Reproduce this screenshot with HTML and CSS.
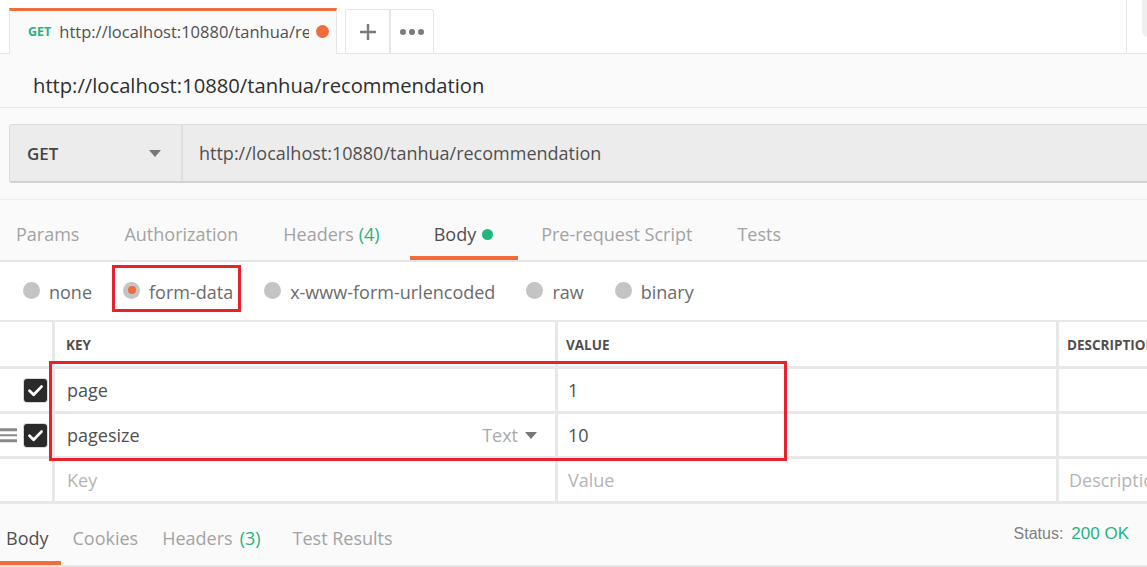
FILE: index.html
```html
<!DOCTYPE html>
<html lang="en">
<head>
<meta charset="utf-8">
<title>Postman request</title>
<link rel="stylesheet" href="styles.css">
</head>
<body>
<div class="app">
  <header class="tabstrip">
    <div class="req-tab">
      <span class="method-tag">GET</span>
      <span class="req-tab-title">http://localhost:10880/tanhua/recommendation</span>
      <span class="unsaved-dot"></span>
    </div>
    <div class="tab-actions">
      <div class="tab-btn tab-btn-plus">
        <svg width="20" height="20" viewBox="0 0 20 20"><path d="M10 2V18M2 10H18" stroke="#7a7a7a" stroke-width="2.4" fill="none"/></svg>
      </div>
      <div class="tab-btn">
        <svg width="26" height="8" viewBox="0 0 26 8"><circle cx="4" cy="4" r="3" fill="#7a7a7a"/><circle cx="13" cy="4" r="3" fill="#7a7a7a"/><circle cx="22" cy="4" r="3" fill="#7a7a7a"/></svg>
      </div>
    </div>
    <div class="strip-spacer"></div>
    <div class="strip-right"><div class="strip-knob"></div></div>
  </header>

  <div class="titlebar">http://localhost:10880/tanhua/recommendation</div>

  <section class="request">
    <div class="urlbar">
      <div class="method-select"><span class="method-label">GET</span><span class="caret"></span></div>
      <div class="url-input">http://localhost:10880/tanhua/recommendation</div>
    </div>
    <nav class="req-tabs">
      <span class="req-tab-item">Params</span>
      <span class="req-tab-item">Authorization</span>
      <span class="req-tab-item">Headers <span class="count">(4)</span></span>
      <span class="req-tab-item active">Body <span class="green-dot"></span></span>
      <span class="req-tab-item">Pre-request Script</span>
      <span class="req-tab-item">Tests</span>
    </nav>
  </section>

  <div class="body-types">
    <span class="radio-item"><span class="radio"></span><span class="radio-label">none</span></span>
    <span class="radio-item selected"><span class="radio"></span><span class="radio-label">form-data</span></span>
    <span class="radio-item"><span class="radio"></span><span class="radio-label">x-www-form-urlencoded</span></span>
    <span class="radio-item"><span class="radio"></span><span class="radio-label">raw</span></span>
    <span class="radio-item"><span class="radio"></span><span class="radio-label">binary</span></span>
  </div>

  <div class="kv-table">
    <div class="kv-row kv-head">
      <div class="cell cell-check"></div>
      <div class="cell">KEY</div>
      <div class="cell">VALUE</div>
      <div class="cell">DESCRIPTION</div>
    </div>
    <div class="kv-row">
      <div class="cell cell-check"><span class="checkbox"><svg width="23" height="23" viewBox="0 0 23 23"><path d="M5.5 11.8L9.6 15.8L17.5 7.6" stroke="#fff" stroke-width="2.8" fill="none" stroke-linecap="round" stroke-linejoin="round"/></svg></span></div>
      <div class="cell">page</div>
      <div class="cell">1</div>
      <div class="cell"></div>
    </div>
    <div class="kv-row">
      <div class="cell cell-check"><span class="drag"><i></i><i></i><i></i></span><span class="checkbox"><svg width="23" height="23" viewBox="0 0 23 23"><path d="M5.5 11.8L9.6 15.8L17.5 7.6" stroke="#fff" stroke-width="2.8" fill="none" stroke-linecap="round" stroke-linejoin="round"/></svg></span></div>
      <div class="cell cell-key"><span>pagesize</span><span class="type-select">Text <span class="type-caret"></span></span></div>
      <div class="cell">10</div>
      <div class="cell"></div>
    </div>
    <div class="kv-row">
      <div class="cell cell-check"></div>
      <div class="cell placeholder">Key</div>
      <div class="cell placeholder">Value</div>
      <div class="cell placeholder">Description</div>
    </div>
    <div class="highlight-box"></div>
  </div>

  <footer class="response">
    <nav class="res-tabs">
      <span class="res-tab active">Body</span>
      <span class="res-tab">Cookies</span>
      <span class="res-tab">Headers <span class="count">(3)</span></span>
      <span class="res-tab">Test Results</span>
    </nav>
    <div class="status"><span class="status-label">Status:</span><span class="status-value">200 OK</span></div>
  </footer>
</div>
</body>
</html>
```

FILE: styles.css
```css
* { box-sizing: border-box; }
html, body { margin: 0; padding: 0; }
body {
  width: 1147px;
  height: 567px;
  overflow: hidden;
  background: #ffffff;
  font-family: "Open Sans", "Noto Sans", sans-serif;
  color: #505050;
}
.app { width: 1147px; height: 567px; overflow: hidden; }

/* ---- top tab strip ---- */
.tabstrip {
  height: 54px;
  display: flex;
  align-items: flex-end;
  border-bottom: 1px solid #e6e6e6;
  background: #ffffff;
}
.req-tab {
  margin-left: 9px;
  width: 328px;
  height: 46px;
  margin-bottom: -1px;
  background: #fafafa;
  border-top: 3px solid #f26b3a;
  border-left: 1px solid #e6e6e6;
  border-right: 1px solid #e6e6e6;
  display: flex;
  align-items: center;
  padding: 0 8px 2px 18px;
  white-space: nowrap;
}
.method-tag {
  color: #26b47f;
  font-weight: 700;
  font-size: 12.5px;
  margin-right: 8px;
}
.req-tab-title {
  font-size: 16.5px;
  color: #505050;
  overflow: hidden;
  width: 250px;
  flex: none;
}
.unsaved-dot {
  width: 13px;
  height: 13px;
  border-radius: 50%;
  background: #f26b3a;
  margin-left: 7px;
  flex: none;
}
.tab-actions {
  margin-left: 8px;
  height: 44px;
  display: flex;
  border: 1px solid #e6e6e6;
  border-bottom: none;
  border-radius: 3px 3px 0 0;
}
.tab-btn {
  width: 42px;
  display: flex;
  align-items: center;
  justify-content: center;
}
.tab-btn-plus { width: 45px; border-right: 2px solid #e6e6e6; }
.strip-spacer { flex: 1; }
.strip-right {
  width: 21px;
  height: 54px;
  border-left: 1px solid #e6e6e6;
  margin-bottom: -1px;
  align-self: flex-start;
}
.strip-knob {
  margin-left: 15px;
  width: 10px;
  height: 37px;
  background: #efefef;
  border-radius: 0 0 0 6px;
}

/* ---- title ---- */
.titlebar {
  height: 54px;
  background: #fafafa;
  border-bottom: 1px solid #e6e6e6;
  padding: 8px 0 0 33px;
  display: flex;
  align-items: center;
  font-size: 20.2px;
  font-weight: 500;
  color: #2e2e2e;
}

/* ---- request ---- */
.request { background: #fafafa; padding-top: 16px; }
.urlbar {
  margin-left: 9px;
  height: 59px;
  display: flex;
  background: #ececec;
  border: 1px solid #dcdcdc;
  border-bottom: 2px solid #d2d2d2;
  border-right: none;
  border-radius: 3px 0 0 3px;
}
.method-select {
  width: 173px;
  border-right: 2px solid #dedede;
  display: flex;
  align-items: center;
  justify-content: space-between;
  padding: 0 20px 0 17px;
}
.method-label { font-size: 17px; font-weight: 600; color: #444; }
.caret {
  width: 0; height: 0;
  border-left: 6px solid transparent;
  border-right: 6px solid transparent;
  border-top: 7px solid #777;
}
.url-input {
  flex: 1;
  display: flex;
  align-items: center;
  padding-left: 16px;
  font-size: 18px;
  color: #505050;
}
.req-tabs {
  margin-top: 16px;
  border-top: 1px solid #ededed;
  height: 63px;
  border-bottom: 2px solid #e6e6e6;
  display: flex;
  gap: 45px;
  padding-left: 16px;
}
.req-tab-item {
  position: relative;
  display: flex;
  align-items: center;
  padding-top: 8px;
  font-size: 18px;
  color: #a3a3a3;
  white-space: nowrap;
}
.req-tab-item .count, .res-tab .count { color: #26b47f; margin-left: 5px; }
.req-tab-item.active { color: #505050; margin-left: 9px; margin-right: 3px; }
.req-tab-item.active::after {
  content: "";
  position: absolute;
  left: -24px;
  right: -25px;
  bottom: 0;
  height: 4px;
  background: #f26b3a;
}
.green-dot {
  width: 11px; height: 11px;
  border-radius: 50%;
  background: #26b47f;
  margin-left: 6px;
  margin-top: 1px;
}

/* ---- body types ---- */
.body-types {
  height: 60px;
  border-bottom: 2px solid #e8e8e8;
  display: flex;
  align-items: center;
  padding: 0 0 0 23px;
  gap: 31px;
}
.radio-item {
  position: relative;
  display: flex;
  align-items: center;
  height: 24px;
  gap: 9px;
  padding-top: 2px;
}
.radio {
  width: 17px; height: 17px;
  border-radius: 50%;
  background: #c4c4c4;
  margin-top: -4px;
  display: flex;
  align-items: center;
  justify-content: center;
}
.radio-label { font-size: 18px; color: #6b6b6b; }
.radio-item.selected .radio::after {
  content: "";
  width: 8px; height: 8px;
  border-radius: 50%;
  background: #f26b3a;
}
.radio-item.selected::before {
  content: "";
  position: absolute;
  left: -11px;
  right: -8px;
  top: -14px;
  bottom: -9px;
  border: 3px solid #e8212b;
}

/* ---- key/value table ---- */
.kv-table { position: relative; }
.kv-row {
  display: grid;
  grid-template-columns: 52px 503px 501px 1fr;
  height: 45px;
  border-bottom: 3px solid #e8e8e8;
}
.kv-head { height: 47px; }
.cell {
  border-left: 3px solid #e8e8e8;
  display: flex;
  align-items: center;
  padding-left: 10px;
  font-size: 18px;
  color: #505050;
  white-space: nowrap;
  overflow: hidden;
}
.kv-row .cell:nth-child(2) { padding-left: 12px; }
.kv-head .cell { font-size: 13.5px; font-weight: 700; color: #505050; padding-top: 2px; padding-left: 8px; }
.kv-head .cell:nth-child(2) { padding-left: 11px; }
.cell-check {
  border-left: none;
  padding: 0 5px 0 0;
  justify-content: flex-end;
  position: relative;
}
.cell.placeholder { color: #b5b5b5; }
.checkbox {
  width: 23px; height: 23px;
  background: #2a2a2a;
  border-radius: 3px;
  box-shadow: 0 0 0 1px #d8d8d8;
  display: flex;
}
.drag {
  position: absolute;
  left: 0;
  top: 50%;
  transform: translateY(-50%);
  width: 17px;
  display: flex;
  flex-direction: column;
  gap: 3px;
}
.drag i { display: block; height: 2.5px; background: #8a8a8a; }
.cell-key { justify-content: space-between; padding-right: 18px; }
.type-select { color: #aaaaaa; display: flex; align-items: center; }
.type-caret {
  width: 0; height: 0;
  border-left: 6px solid transparent;
  border-right: 6px solid transparent;
  border-top: 7px solid #777;
  margin-left: 7px;
}
.highlight-box {
  position: absolute;
  left: 49px;
  top: 39px;
  width: 738px;
  height: 100px;
  border: 3px solid #e8212b;
  pointer-events: none;
}

/* ---- response ---- */
.response {
  height: 63px;
  background: #fafafa;
  border-bottom: 2px solid #e6e6e6;
  display: flex;
  justify-content: space-between;
}
.res-tabs { display: flex; }
.res-tab {
  position: relative;
  display: flex;
  align-items: center;
  padding: 7px 12px 0;
  font-size: 18px;
  color: #a3a3a3;
  white-space: nowrap;
}
.res-tab:first-child { padding-left: 6px; }
.res-tab:nth-child(3) .count { margin-left: 7px; }
.res-tab:last-child { margin-left: 8px; }
.res-tab.active { color: #505050; }
.res-tab.active::after {
  content: "";
  position: absolute;
  left: 0; right: 0; bottom: 0;
  height: 4px;
  background: #f26b3a;
}
.status {
  display: flex;
  align-items: center;
  padding: 0 18px 2px 0;
  font-family: "Liberation Sans", Arial, sans-serif;
}
.status-label { font-size: 16px; color: #808080; margin-right: 8px; }
.status-value { font-size: 17px; color: #26b47f; }
```
